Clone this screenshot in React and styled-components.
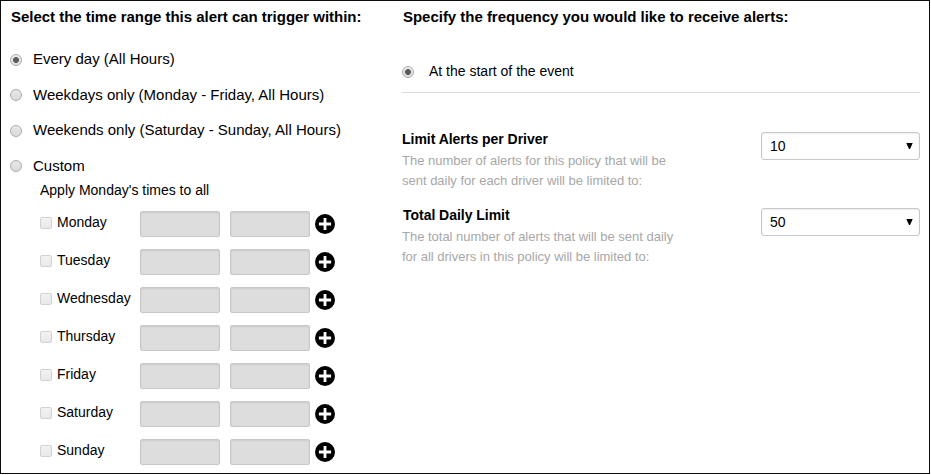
import React from 'react'
import styled, { createGlobalStyle } from 'styled-components'


const ranges = [
  'Every day (All Hours)',
  'Weekdays only (Monday - Friday, All Hours)',
  'Weekends only (Saturday - Sunday, All Hours)',
  'Custom',
]

const days = ['Monday', 'Tuesday', 'Wednesday', 'Thursday', 'Friday', 'Saturday', 'Sunday']

const limits = [
  {
    title: 'Limit Alerts per Driver',
    lines: ['The number of alerts for this policy that will be', 'sent daily for each driver will be limited to:'],
    value: '10',
  },
  {
    title: 'Total Daily Limit',
    indent: '1px',
    lines: ['The total number of alerts that will be sent daily', 'for all drivers in this policy will be limited to:'],
    value: '50',
  },
]

const PlusIcon = () => (
  <svg width="20" height="20" viewBox="0 0 20 20">
    <circle cx="10" cy="10" r="10" fill="#000" />
    <path d="M10 3.9v12.2M3.9 10h12.2" stroke="#fff" strokeWidth="2.8" />
  </svg>
)

const App = () => {
    return(
      <>
        <GlobalStyle />
        <Page>
          <TimeRange>
            <Heading>Select the time range this alert can trigger within:</Heading>
            <Options>
              {ranges.map((range, i) => (
                <Option key={range}>
                  <Radio name="range" defaultChecked={i === 0} />
                  <span>{range}</span>
                </Option>
              ))}
            </Options>

            <Custom>
              <ApplyAll>Apply Monday's times to all</ApplyAll>
              {days.map(day => (
                <DayRow key={day}>
                  <Checkbox disabled />
                  <DayName>{day}</DayName>
                  <TimeInput disabled />
                  <TimeInput disabled />
                  <AddButton aria-label={`Add ${day} time`}><PlusIcon /></AddButton>
                </DayRow>
              ))}
            </Custom>
          </TimeRange>

          <Frequency>
            <Heading>Specify the frequency you would like to receive alerts:</Heading>
            <EventOption>
              <Radio name="frequency" defaultChecked />
              <span>At the start of the event</span>
            </EventOption>

            {limits.map(limit => (
              <LimitRow key={limit.title}>
                <div>
                  <LimitTitle $indent={limit.indent}>{limit.title}</LimitTitle>
                  <LimitText>{limit.lines[0]}<br />{limit.lines[1]}</LimitText>
                </div>
                <Select>
                  {limit.value}
                  <svg width="7" height="6" viewBox="0 0 7 6"><path d="M.3 0h6.4L4 6H3z" /></svg>
                </Select>
              </LimitRow>
            ))}
          </Frequency>
        </Page>
      </>
    )
}


const GlobalStyle = createGlobalStyle`
body {
  margin: 0;
  background: #fff;
}
* {
  box-sizing: border-box;
}
`;

const Page = styled.div`
display: flex;
width: 930px;
height: 474px;
border: 1px solid #0d0a0c;
font-family: "Liberation Sans", Arial, sans-serif;
font-size: 14px;
color: #000;
overflow: hidden;
`;

const TimeRange = styled.section`
width: 401px;
padding: 7px 0 0 9px;
`;

const Frequency = styled.section`
width: 518px;
padding-top: 7px;
`;

const Heading = styled.h2`
margin: 0;
padding-left: 1px;
font-size: 15px;
line-height: 17px;
font-weight: bold;
letter-spacing: -0.025px;
white-space: nowrap;
`;

const Options = styled.div`
padding-top: 17px;
`;

const Option = styled.label`
display: flex;
align-items: center;
gap: 11px;
height: 35.5px;
font-size: 15px;
line-height: 17px;
white-space: nowrap;

span {
  margin-top: -2px;
}
`;

const Radio = styled.input.attrs({ type: 'radio' })`
appearance: none;
flex: none;
width: 12px;
height: 12px;
margin: 0;
border: 1px solid #acacac;
border-radius: 50%;
background: linear-gradient(#e8e8e8, #dadada);

&:checked {
  background: radial-gradient(circle, #5c5c5c 2.6px, transparent 3.3px), linear-gradient(#ededed, #dedede);
}
`;

const Custom = styled.div`
margin-top: -2px;
padding-left: 30px;
`;

const ApplyAll = styled.div`
height: 23px;
line-height: 16px;
`;

const DayRow = styled.div`
display: flex;
align-items: center;
height: 38px;
`;

const Checkbox = styled.input.attrs({ type: 'checkbox' })`
appearance: none;
width: 12px;
height: 12px;
margin: -2px 5px 0 0;
border: 1px solid #d2d2d2;
border-radius: 2px;
background: linear-gradient(#f2f2f2, #e9e9e9);
`;

const DayName = styled.span`
width: 83px;
line-height: 16px;
margin-top: -4px;
`;

const TimeInput = styled.input`
width: 80px;
height: 26px;
margin: 0 10px 0 0;
border: 1px solid #c8c8c8;
border-radius: 2px;
background: #ddd;
box-shadow: inset 0 1px 2px rgba(0, 0, 0, 0.08);
`;

const AddButton = styled.button`
display: flex;
margin-left: -5px;
padding: 0;
border: 0;
background: none;
`;

const EventOption = styled.label`
display: flex;
align-items: center;
gap: 15px;
height: 68px;
padding-top: 27px;
margin-bottom: 38px;
border-bottom: 1px solid #d9d9d9;

span {
  margin-top: -2px;
}
`;

const LimitRow = styled.div`
display: flex;
justify-content: space-between;
align-items: flex-start;
height: 76px;
`;

const LimitTitle = styled.div`
padding-left: ${props => props.$indent || 0};
font-weight: bold;
line-height: 16px;
letter-spacing: -0.03px;
margin-bottom: 4px;
`;

const LimitText = styled.div`
font-size: 13px;
line-height: 20px;
letter-spacing: -0.01px;
color: #a7a7a7;
white-space: nowrap;
`;

const Select = styled.div`
display: flex;
align-items: center;
justify-content: space-between;
width: 159px;
height: 28px;
margin-top: 1px;
padding: 0 6px 0 8px;
border: 1px solid #c8c8c8;
border-radius: 3px;
box-shadow: inset 0 1px 2px rgba(0, 0, 0, 0.08);
`;

export default App
